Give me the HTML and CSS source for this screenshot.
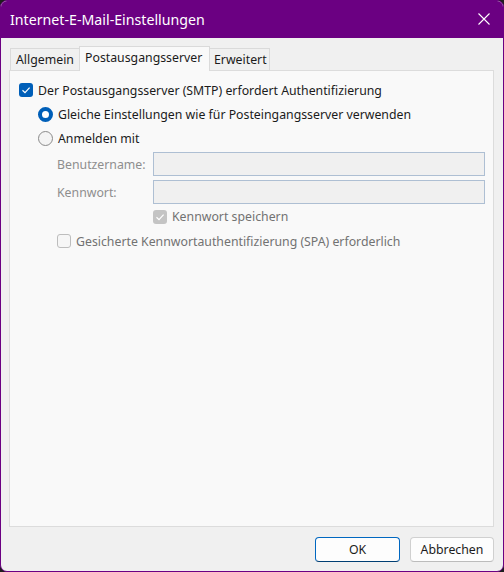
FILE: index.html
```html
<!DOCTYPE html>
<html lang="de">
<head>
<meta charset="utf-8">
<title>Internet-E-Mail-Einstellungen</title>
<link rel="stylesheet" href="styles.css">
</head>
<body>
<div class="window">
  <div class="titlebar">
    <span class="title">Internet-E-Mail-Einstellungen</span>
    <svg class="close" width="12" height="12" viewBox="0 0 12 12"><path d="M0.5 0.5 L11.5 11.5 M11.5 0.5 L0.5 11.5" stroke="#fff" stroke-width="1.1" fill="none"/></svg>
  </div>
  <div class="content">
    <div class="tabs">
      <div class="tab tab-a">Allgemein</div>
      <div class="tab tab-b active">Postausgangsserver</div>
      <div class="tab tab-c">Erweitert</div>
    </div>
    <div class="panel">
      <div class="row row-top">
        <span class="cb checked"><svg width="14" height="14" viewBox="0 0 14 14"><path d="M3.5 7.2 L6 9.6 L10.6 4.6" stroke="#fff" stroke-width="1.2" fill="none"/></svg></span>
        <span class="label">Der Postausgangsserver (SMTP) erfordert Authentifizierung</span>
      </div>
      <div class="row indent1">
        <span class="radio on"></span>
        <span class="label">Gleiche Einstellungen wie für Posteingangsserver verwenden</span>
      </div>
      <div class="row indent1">
        <span class="radio"></span>
        <span class="label">Anmelden mit</span>
      </div>
      <div class="field first">
        <span class="flabel">Benutzername:</span>
        <span class="input"></span>
      </div>
      <div class="field">
        <span class="flabel">Kennwort:</span>
        <span class="input"></span>
      </div>
      <div class="row indent3">
        <span class="cb dis-checked"><svg width="14" height="14" viewBox="0 0 14 14"><path d="M3.5 7.2 L6 9.6 L10.6 4.6" stroke="#fff" stroke-width="1.2" fill="none"/></svg></span>
        <span class="label dim">Kennwort speichern</span>
      </div>
      <div class="row indent2">
        <span class="cb empty"></span>
        <span class="label dim">Gesicherte Kennwortauthentifizierung (SPA) erforderlich</span>
      </div>
    </div>
    <div class="buttons">
      <button class="btn primary">OK</button>
      <button class="btn">Abbrechen</button>
    </div>
  </div>
</div>
</body>
</html>
```

FILE: styles.css
```css
* { box-sizing: border-box; }
html, body {
  margin: 0;
  padding: 0;
  background: #1e1e1e;
}
body {
  font-family: "Noto Sans", "Open Sans", sans-serif;
  font-size: 12.3px;
  color: #1b1b1b;
}
.window {
  width: 504px;
  height: 572px;
  border: 1px solid #6b0082;
  border-radius: 7px;
  background: #f0f0f0;
  overflow: hidden;
  display: flex;
  flex-direction: column;
}
.titlebar {
  height: 37px;
  background: #6b0082;
  color: #fff;
  display: flex;
  align-items: center;
  padding: 0 13px 0 9px;
  flex: none;
}
.title {
  font-size: 14.2px;
  flex: 1;
  padding-bottom: 1px;
}
.close { display: block; margin-bottom: 1px; }
.content {
  flex: 1;
  display: flex;
  flex-direction: column;
  padding: 8px 9px 9px 8px;
}
.tabs {
  display: flex;
  align-items: flex-end;
  height: 24px;
  padding-left: 1px;
}
.tab {
  height: 22px;
  border: 1px solid #dadada;
  border-bottom: none;
  background: #f0f0f0;
  display: flex;
  align-items: center;
  padding-left: 5px;
  padding-bottom: 1px;
  white-space: nowrap;
}
.tab-a { width: 69px; border-right: none; }
.tab-b { width: 131px; }
.tab-c { width: 60px; border-left: none; padding-left: 4px; }
.tab.active {
  height: 25px;
  background: #f9f9f9;
  margin-bottom: -1px;
  position: relative;
  z-index: 1;
  padding-left: 5px;
  padding-bottom: 3px;
}
.panel {
  flex: 1;
  border: 1px solid #dcdcdc;
  background: #f9f9f9;
  padding: 7px 0 0 9px;
}
.row {
  height: 24px;
  display: flex;
  align-items: center;
}
.indent1 { padding-left: 19px; }
.indent2 { padding-left: 38px; }
.indent3 { padding-left: 134px; height: 25px; }
.label { padding-left: 5px; white-space: nowrap; }
.dim { color: #727272; }
.cb {
  width: 14px;
  height: 14px;
  border-radius: 3px;
  flex: none;
  display: block;
}
.cb svg { display: block; }
.cb.checked { background: #005fb8; }
.cb.dis-checked { background: #c4c4c4; }
.cb.empty { border: 1px solid #bdbdbd; background: #f6f6f6; }
.radio {
  width: 15px;
  height: 15px;
  border-radius: 50%;
  border: 1px solid #8a8a8a;
  background: #f4f4f4;
  flex: none;
}
.radio.on {
  border: 4px solid #005fb8;
  background: #fff;
}
.field {
  height: 24px;
  display: flex;
  align-items: center;
  margin-top: 4px;
  padding-left: 38px;
}
.field.first { margin-top: 2px; }
.flabel {
  width: 96px;
  color: #8e8e8e;
  flex: none;
}
.input {
  width: 332px;
  height: 24px;
  border: 1px solid #aebfd3;
  background: #f0f0f0;
  display: block;
}
.buttons {
  display: flex;
  justify-content: flex-end;
  gap: 10px;
  padding-top: 10px;
}
.btn {
  font-family: inherit;
  font-size: 12.3px;
  color: #1b1b1b;
  width: 85px;
  height: 25px;
  background: #fdfdfd;
  border: 1px solid #d0d0d0;
  border-bottom-color: #bcbcbc;
  border-radius: 4px;
  padding: 0;
}
.btn.primary {
  border: 1px solid #0067c0;
  border-bottom-color: #003e73;
}
.btn + .btn { width: 84px; }
```
